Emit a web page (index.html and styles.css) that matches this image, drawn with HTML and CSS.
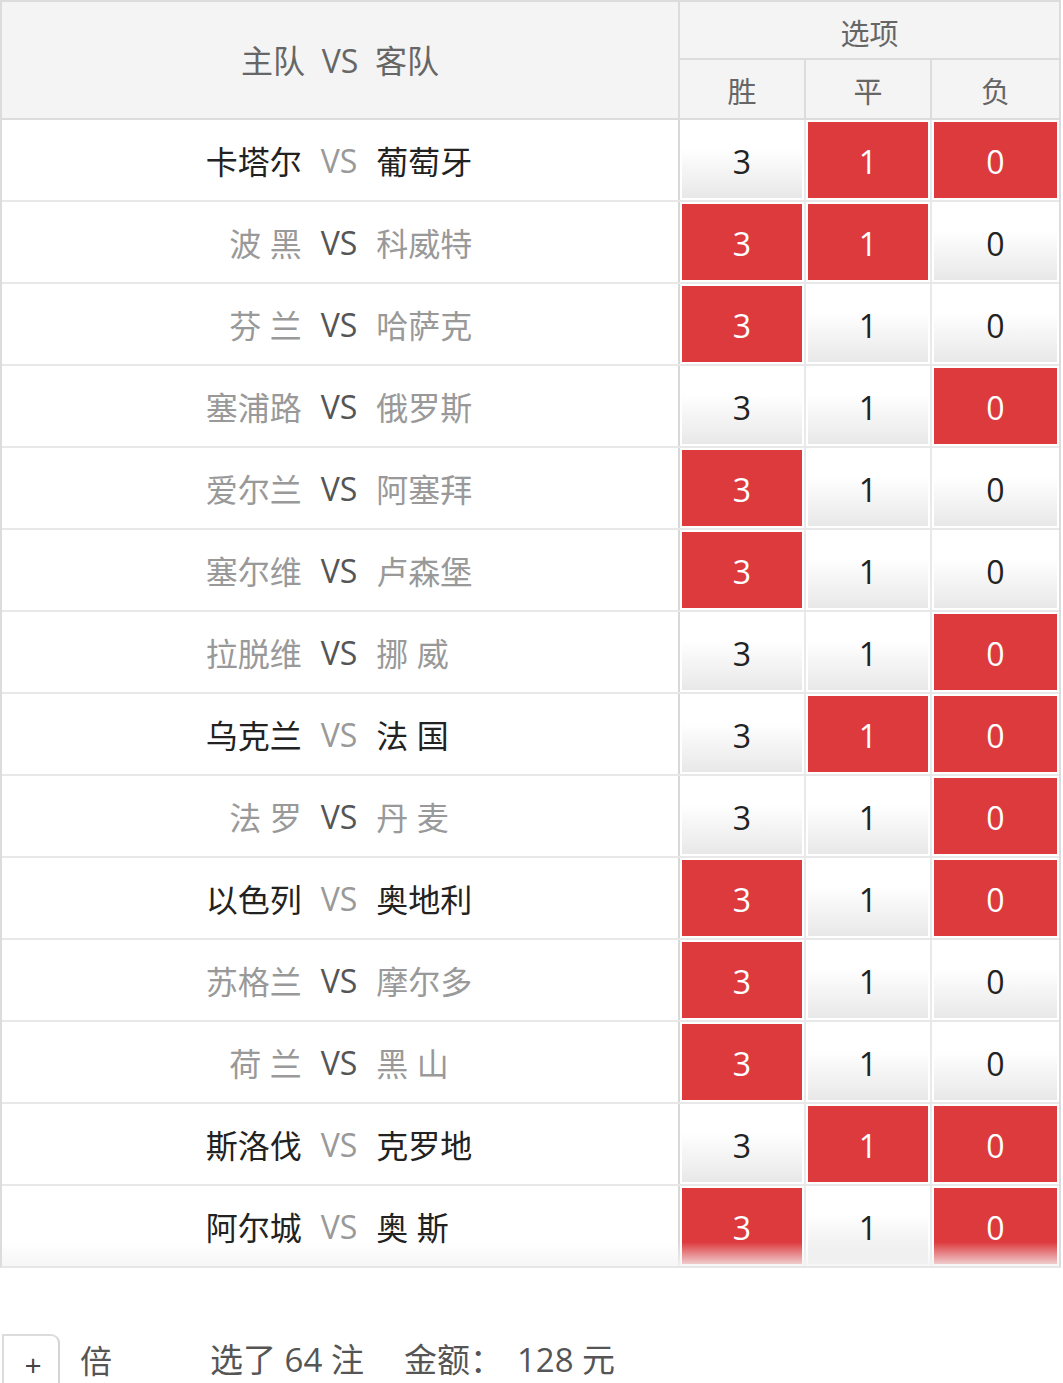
FILE: index.html
```
<!DOCTYPE html>
<html lang="zh">
<head>
<meta charset="utf-8">
<title>主队 VS 客队</title>
<link rel="stylesheet" href="styles.css">
</head>
<body>
<div class="sheet">
  <div class="head">
    <div class="head-match">主队&nbsp;&nbsp;VS&nbsp;&nbsp;客队</div>
    <div class="head-opts">
      <div class="head-title">选项</div>
      <div class="head-cols">
        <div class="head-col">胜</div>
        <div class="head-col">平</div>
        <div class="head-col">负</div>
      </div>
    </div>
  </div>
  <div class="rows">
    <div class="row double"><div class="match"><span class="home">卡塔尔</span><span class="vs">VS</span><span class="away">葡萄牙</span></div><div class="opt"><span class="btn">3</span></div><div class="opt"><span class="btn on">1</span></div><div class="opt"><span class="btn on">0</span></div></div>
    <div class="row"><div class="match"><span class="home">波 黑</span><span class="vs">VS</span><span class="away">科威特</span></div><div class="opt"><span class="btn on">3</span></div><div class="opt"><span class="btn on">1</span></div><div class="opt"><span class="btn">0</span></div></div>
    <div class="row"><div class="match"><span class="home">芬 兰</span><span class="vs">VS</span><span class="away">哈萨克</span></div><div class="opt"><span class="btn on">3</span></div><div class="opt"><span class="btn">1</span></div><div class="opt"><span class="btn">0</span></div></div>
    <div class="row"><div class="match"><span class="home">塞浦路</span><span class="vs">VS</span><span class="away">俄罗斯</span></div><div class="opt"><span class="btn">3</span></div><div class="opt"><span class="btn">1</span></div><div class="opt"><span class="btn on">0</span></div></div>
    <div class="row"><div class="match"><span class="home">爱尔兰</span><span class="vs">VS</span><span class="away">阿塞拜</span></div><div class="opt"><span class="btn on">3</span></div><div class="opt"><span class="btn">1</span></div><div class="opt"><span class="btn">0</span></div></div>
    <div class="row"><div class="match"><span class="home">塞尔维</span><span class="vs">VS</span><span class="away">卢森堡</span></div><div class="opt"><span class="btn on">3</span></div><div class="opt"><span class="btn">1</span></div><div class="opt"><span class="btn">0</span></div></div>
    <div class="row"><div class="match"><span class="home">拉脱维</span><span class="vs">VS</span><span class="away">挪 威</span></div><div class="opt"><span class="btn">3</span></div><div class="opt"><span class="btn">1</span></div><div class="opt"><span class="btn on">0</span></div></div>
    <div class="row double"><div class="match"><span class="home">乌克兰</span><span class="vs">VS</span><span class="away">法 国</span></div><div class="opt"><span class="btn">3</span></div><div class="opt"><span class="btn on">1</span></div><div class="opt"><span class="btn on">0</span></div></div>
    <div class="row"><div class="match"><span class="home">法 罗</span><span class="vs">VS</span><span class="away">丹 麦</span></div><div class="opt"><span class="btn">3</span></div><div class="opt"><span class="btn">1</span></div><div class="opt"><span class="btn on">0</span></div></div>
    <div class="row double"><div class="match"><span class="home">以色列</span><span class="vs">VS</span><span class="away">奥地利</span></div><div class="opt"><span class="btn on">3</span></div><div class="opt"><span class="btn">1</span></div><div class="opt"><span class="btn on">0</span></div></div>
    <div class="row"><div class="match"><span class="home">苏格兰</span><span class="vs">VS</span><span class="away">摩尔多</span></div><div class="opt"><span class="btn on">3</span></div><div class="opt"><span class="btn">1</span></div><div class="opt"><span class="btn">0</span></div></div>
    <div class="row"><div class="match"><span class="home">荷 兰</span><span class="vs">VS</span><span class="away">黑 山</span></div><div class="opt"><span class="btn on">3</span></div><div class="opt"><span class="btn">1</span></div><div class="opt"><span class="btn">0</span></div></div>
    <div class="row double"><div class="match"><span class="home">斯洛伐</span><span class="vs">VS</span><span class="away">克罗地</span></div><div class="opt"><span class="btn">3</span></div><div class="opt"><span class="btn on">1</span></div><div class="opt"><span class="btn on">0</span></div></div>
    <div class="row double"><div class="match"><span class="home">阿尔城</span><span class="vs">VS</span><span class="away">奥 斯</span></div><div class="opt"><span class="btn on">3</span></div><div class="opt"><span class="btn">1</span></div><div class="opt"><span class="btn on">0</span></div></div>
  </div>
</div>
<div class="footer">
  <div class="stepper">+</div>
  <div class="unit">倍</div>
  <div class="summary"><span>选了 64 注</span><span class="amount">金额：</span><span class="money">128 元</span></div>
</div>
</body>
</html>
```
FILE: styles.css
```
* { box-sizing: border-box; }
html, body { margin: 0; padding: 0; background: #fff; }
body {
  font-family: "Open Sans", "Noto Sans CJK SC", sans-serif;
  font-size: 32px;
  color: #555;
  width: 1063px;
  height: 1383px;
  overflow: hidden;
}
.sheet {
  width: 1061px;
  border: 2px solid #dcdcdc;
  border-bottom: 2px solid #e6e6e6;
}
.head {
  display: flex;
  background: #f4f4f4;
  border-bottom: 2px solid #dcdcdc;
  height: 118px;
}
.head-match {
  width: 678px;
  border-right: 2px solid #dcdcdc;
  display: flex;
  align-items: center;
  justify-content: center;
  color: #666;
  padding-bottom: 2px;
}
.head-opts {
  flex: 1;
  display: flex;
  flex-direction: column;
}
.head-title {
  height: 58px;
  border-bottom: 2px solid #dcdcdc;
  display: flex;
  align-items: center;
  justify-content: center;
  color: #666;
  font-size: 29px;
  padding-top: 4px;
}
.head-cols {
  flex: 1;
  display: grid;
  grid-template-columns: 126px 126px 1fr;
}
.head-col {
  border-right: 2px solid #dcdcdc;
  display: flex;
  align-items: center;
  justify-content: center;
  color: #666;
  font-size: 29px;
  padding-top: 2px;
}
.head-col:last-child { border-right: none; }
.rows { position: relative; }
.rows::after {
  content: "";
  position: absolute;
  left: 0; right: 0; bottom: 0;
  height: 24px;
  background: linear-gradient(rgba(244,244,244,0), rgba(244,244,244,0.85));
  pointer-events: none;
}
.row {
  display: grid;
  grid-template-columns: 678px 126px 126px 1fr;
  height: 82px;
  border-bottom: 2px solid #e8e8e8;
}
.row:last-child { border-bottom: none; height: 80px; }
.match {
  border-right: 2px solid #d8d8d8;
  display: grid;
  grid-template-columns: 1fr auto 1fr;
  column-gap: 19px;
  align-items: center;
  padding-right: 2px;
}
.home { text-align: right; color: #999; }
.away { text-align: left; color: #999; }
.vs { color: #555; }
.double .home, .double .away { color: #222; }
.double .vs { color: #999; }
.opt {
  border-right: 2px solid #e6eaea;
  padding: 2px;
  display: flex;
}
.opt:last-child { border-right: none; }
.btn {
  flex: 1;
  display: flex;
  align-items: center;
  justify-content: center;
  color: #222;
  background: linear-gradient(#ffffff 35%, #e8e8e8);
  padding-top: 2px;
}
.btn.on {
  background: #dd3a3d;
  color: #fff;
}
.footer {
  display: flex;
  align-items: flex-start;
  margin-top: 66px;
}
.stepper {
  width: 58px;
  height: 60px;
  margin-left: 2px;
  border: 2px solid #dcdcdc;
  border-right-color: #d4d4d4;
  border-radius: 0 9px 0 0;
  display: flex;
  align-items: center;
  justify-content: center;
  font-size: 30px;
  color: #444;
  padding-left: 4px;
}
.unit {
  margin-left: 20px;
  padding-top: 2px;
  color: #555;
  font-size: 32px;
}
.summary {
  margin-left: 98px;
  color: #555;
  font-size: 33px;
  display: flex;
}
.amount { margin-left: 40px; }
.money { margin-left: 14px; }
```
